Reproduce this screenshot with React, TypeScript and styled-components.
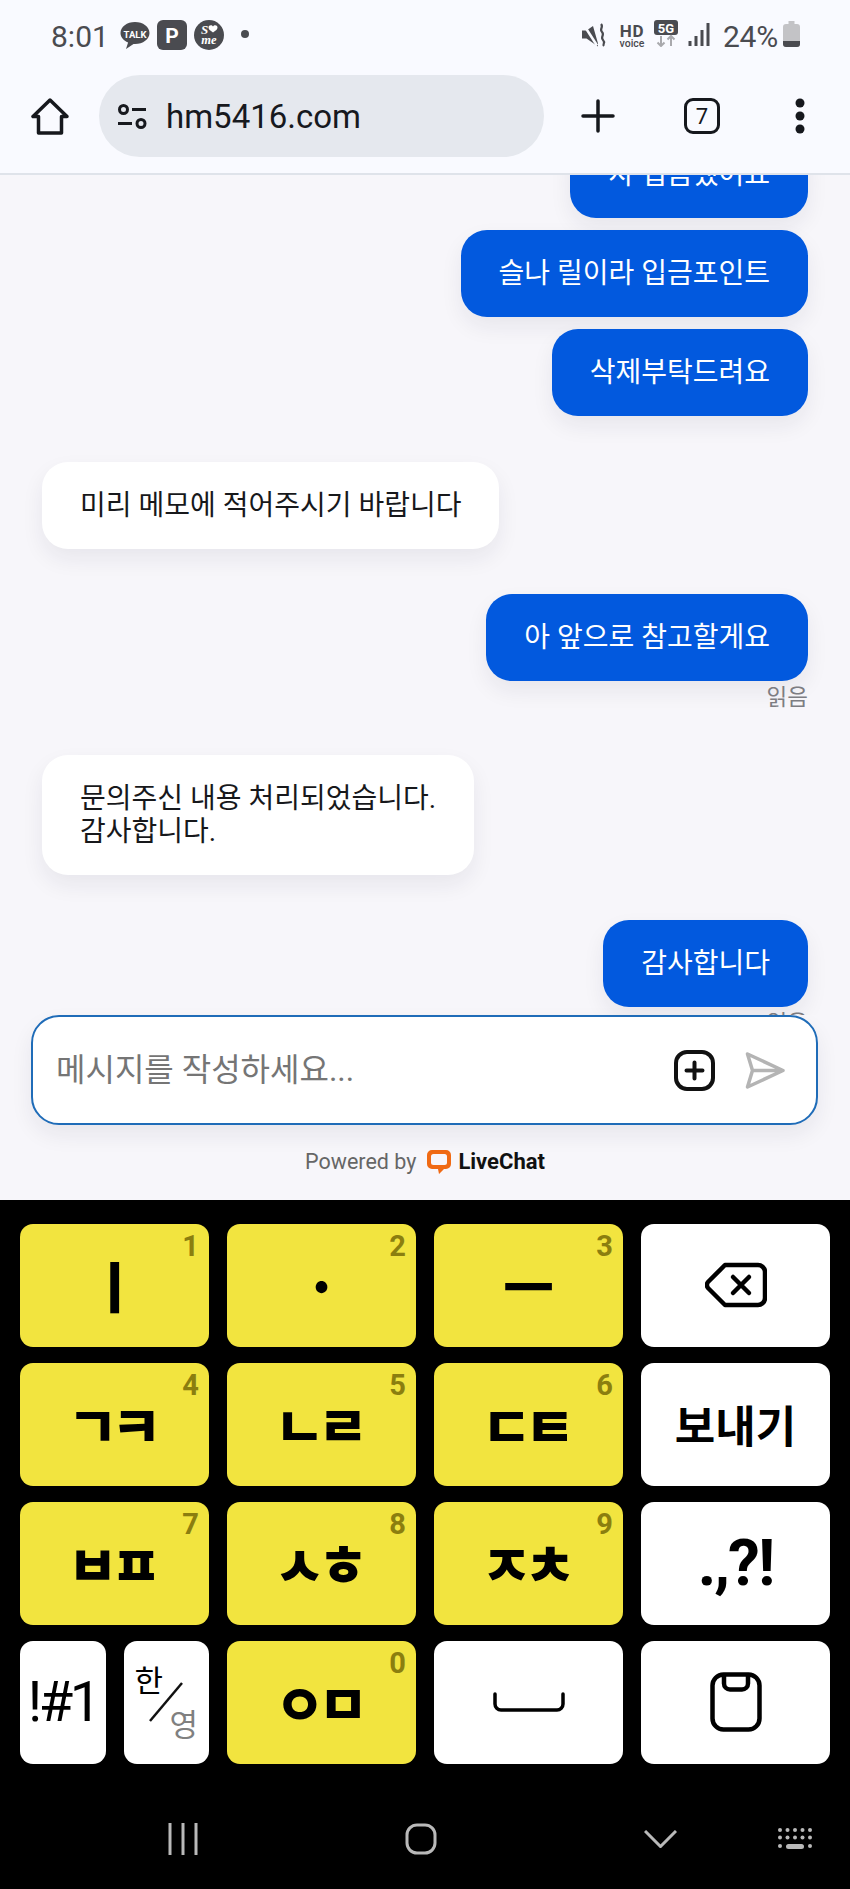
import styled, { createGlobalStyle } from "styled-components";

const GlobalStyle = createGlobalStyle`
    * {
        box-sizing: border-box;
    }
    html, body {
        margin: 0;
        padding: 0;
        background: #000;
    }
    body {
        font-family: Roboto, "Noto Sans CJK KR", sans-serif;
    }
`

const Page = styled.div`
    width: 850px;
    height: 1889px;
    display: flex;
    flex-direction: column;
    overflow: hidden;
`

const BrowserHeader = styled.header`
    height: 175px;
    flex: none;
    background: #f9faff;
    border-bottom: 2px solid #dfe3ea;
    position: relative;
    z-index: 2;
`

const StatusBar = styled.div`
    height: 75px;
    padding: 20px 50px 0 51px;
    display: flex;
    align-items: flex-start;
    color: #4a4b50;
`

const Clock = styled.span`
    font-size: 30px;
    line-height: 30px;
    margin: 2px 13px 0 0;
    width: 56px;
`

const NotifyIcons = styled.div`
    display: flex;
    align-items: flex-start;
    gap: 7px;
`

const NotifyDot = styled.span`
    width: 8px;
    height: 8px;
    margin: 10px 0 0 17px;
    border-radius: 50%;
    background: #4a4b50;
`

const SystemIcons = styled.div`
    margin-left: auto;
    display: flex;
    align-items: flex-start;
`

const Battery = styled.span`
    font-size: 30px;
    line-height: 30px;
    margin: 2px 5px 0 13px;
    letter-spacing: -0.2px;
`

const Toolbar = styled.div`
    height: 82px;
    padding-left: 31px;
    display: flex;
    align-items: center;
    color: #16181d;
`

const AddressPill = styled.div`
    width: 445px;
    height: 82px;
    margin: 0 37px 0 30px;
    padding-left: 18px;
    border-radius: 41px;
    background: #e5e8ee;
    display: flex;
    align-items: center;
    gap: 19px;
`

const AddressText = styled.span`
    font-size: 33px;
    color: #17191e;
`

const TabCount = styled.span`
    width: 36px;
    height: 36px;
    margin: 0 74px 0 69px;
    border: 3.5px solid #16181d;
    border-radius: 9px;
    font-size: 22px;
    display: flex;
    align-items: center;
    justify-content: center;
`

const ChatPanel = styled.main`
    height: 1025px;
    flex: none;
    background: #f7f6fa;
    display: flex;
    flex-direction: column;
`

const ThreadClip = styled.div`
    height: 840px;
    flex: none;
    overflow: hidden;
    display: flex;
    flex-direction: column;
    justify-content: flex-end;
`

const Thread = styled.div`
    padding: 0 42px;
    margin-bottom: -20px;
    display: flex;
    flex-direction: column;
    gap: 45.5px;
`

const Group = styled.div<{ $mine?: boolean }>`
    display: flex;
    flex-direction: column;
    gap: 12px;
    align-items: ${(p) => (p.$mine ? "flex-end" : "flex-start")};
`

const Bubble = styled.div<{ $mine?: boolean }>`
    padding: 27px 38px;
    border-radius: 26px;
    font-size: 28px;
    line-height: 33px;
    white-space: pre-line;
    color: ${(p) => (p.$mine ? "#fff" : "#17181b")};
    background: ${(p) => (p.$mine ? "#0259de" : "#fff")};
    box-shadow: 0 10px 22px rgba(30, 30, 60, 0.07);
`

const Receipt = styled.span`
    margin-top: -8px;
    height: 24px;
    font-size: 22.5px;
    line-height: 24px;
    color: #7d7d82;
`

const Composer = styled.div`
    width: 787px;
    height: 110px;
    flex: none;
    margin-left: 31px;
    padding: 0 31px 0 23px;
    border: 2px solid #1f6cb8;
    border-radius: 28px;
    background: #fff;
    box-shadow: 0 10px 22px rgba(30, 30, 60, 0.07);
    display: flex;
    align-items: center;
    position: relative;
`

const ComposerInput = styled.input`
    flex: 1;
    min-width: 0;
    height: 60px;
    border: 0;
    outline: 0;
    padding: 0;
    font: 32px Roboto, "Noto Sans CJK KR", sans-serif;
    background: transparent;

    ::placeholder {
        color: #7b7b7f;
        opacity: 1;
    }
`

const Credit = styled.div`
    margin-top: 24px;
    display: flex;
    align-items: center;
    justify-content: center;
    gap: 10px;
    font-size: 21.5px;
    color: #666;
`

const LiveChatMark = styled.span`
    display: flex;
    align-items: center;
    gap: 6px;
    color: #111;
    font-weight: 700;
    font-size: 22px;
`

const KeyboardArea = styled.section`
    flex: 1;
    background: #000;
    padding-top: 24px;
`

const KeyGrid = styled.div`
    padding: 0 20px;
    display: grid;
    grid-template-columns: repeat(4, 189px);
    grid-auto-rows: 122.5px;
    column-gap: 18px;
    row-gap: 16.5px;
`

const Key = styled.div<{ $yellow?: boolean }>`
    position: relative;
    border-radius: 13px;
    background: ${(p) => (p.$yellow ? "#f2e43f" : "#fff")};
    color: #000;
    display: flex;
    align-items: center;
    justify-content: center;
`

const SplitKeys = styled.div`
    display: grid;
    grid-template-columns: 1fr 1fr;
    gap: 18px;
`

const KeyDigit = styled.span`
    position: absolute;
    top: 5px;
    right: 10px;
    font-size: 29px;
    font-weight: 700;
    color: #8b7e0f;
`

const Jamo = styled.span`
    font-family: "Noto Sans CJK KR", sans-serif;
    font-weight: 900;
    font-size: 55px;
    letter-spacing: -7px;
    line-height: 1;
    margin: -2px 0 0 -7px;
`

const KeyLabel = styled.span<{ $size: number; $weight?: number; $tight?: number }>`
    font-family: Roboto, "Noto Sans CJK KR", sans-serif;
    font-size: ${(p) => p.$size}px;
    font-weight: ${(p) => p.$weight ?? 500};
    letter-spacing: ${(p) => p.$tight ?? 0}px;
`

const HanYeong = styled(Key)`
    font-family: "Noto Sans CJK KR", sans-serif;
    font-size: 31px;
    line-height: 1;
`

const HanLabel = styled.span`
    position: absolute;
    top: 22px;
    left: 11px;
`

const YeongLabel = styled.span`
    position: absolute;
    bottom: 26px;
    right: 11px;
    color: #808080;
`

const NavBar = styled.nav`
    height: 100px;
    margin-top: 25px;
    padding-left: 62px;
    display: grid;
    grid-template-columns: 242px 234px 244px 26px;
    justify-items: center;
    align-items: center;
    color: #b9b9b9;
`

const Talk = () => (
    <svg width="30" height="30" viewBox="0 0 30 30">
        <path d="M15 2C7 2 .5 6.900.5 13c0 4.200 3 7.600 7.600 9.500L6 29l7.500-5c.5 0 1 .1 1.500.1 8 0 14.500-5 14.500-11.100S23 2 15 2z" fill="#4a4b50" />
        <text x="15" y="17.500" fontSize="9.500" fontWeight="700" fill="#fff" textAnchor="middle" fontFamily="Roboto, sans-serif">TALK</text>
    </svg>
)

const ParkIcon = () => (
    <svg width="30" height="30" viewBox="0 0 30 30">
        <rect width="30" height="30" rx="6" fill="#4a4b50" />
        <text x="15" y="23" fontSize="21" fontWeight="700" fill="#fff" textAnchor="middle" fontFamily="Roboto, sans-serif">P</text>
    </svg>
)

const SomeIcon = () => (
    <svg width="30" height="30" viewBox="0 0 30 30">
        <circle cx="15" cy="15" r="15" fill="#4a4b50" />
        <text x="10.500" y="14" fontSize="13" fontStyle="italic" fontWeight="700" fill="#fff" textAnchor="middle" fontFamily="'Liberation Serif', serif">S</text>
        <path d="M19 12.500c-3-2-4.500-3.300-4.500-5 0-2.500 3.400-3 4.500-1 1.100-2 4.500-1.500 4.500 1 0 1.700-1.500 3-4.500 5z" fill="#fff" />
        <text x="15" y="24" fontSize="12.500" fontStyle="italic" fontWeight="700" fill="#fff" textAnchor="middle" fontFamily="'Liberation Serif', serif">me</text>
    </svg>
)

const MuteIcon = () => (
    <svg width="24" height="24" viewBox="0 0 24 24" style={{ marginTop: 3 }}>
        <path d="M0 7.500h4.500L11 3l5 17.500v3L4.500 15.500H0z" fill="#4a4b50" />
        <path d="M1.500 1.500l13.500 21" stroke="#f9faff" strokeWidth="2.500" />
        <path d="M19 1c3 3-2 5 1 8s-2 5 1 8-1 4 1 6" stroke="#4a4b50" strokeWidth="2.200" fill="none" />
    </svg>
)

const HdVoice = () => (
    <svg width="28" height="24" viewBox="0 0 28 24" overflow="visible" style={{ margin: "4px 0 0 12px" }}>
        <text x="14" y="13" fontSize="17" fontWeight="700" fill="#4a4b50" textAnchor="middle" letterSpacing="0.800" fontFamily="Roboto, sans-serif">HD</text>
        <text x="14" y="22.500" fontSize="10.500" fontWeight="500" fill="#4a4b50" textAnchor="middle" fontFamily="Roboto, sans-serif">voice</text>
    </svg>
)

const FiveG = () => (
    <svg width="24" height="27" viewBox="0 0 24 27" style={{ marginLeft: 8 }}>
        <rect width="24" height="15" rx="3" fill="#4a4b50" />
        <text x="12" y="12.500" fontSize="13" fontWeight="700" fill="#fff" textAnchor="middle" fontFamily="Roboto, sans-serif">5G</text>
        <path d="M7 16v10M3.500 22.500L7 26l3.500-3.500" stroke="#a9a9ad" strokeWidth="2" fill="none" />
        <path d="M17 26V16M13.500 19.500L17 16l3.500 3.500" stroke="#a9a9ad" strokeWidth="2" fill="none" />
    </svg>
)

const Signal = () => (
    <svg width="22" height="23" viewBox="0 0 22 23" style={{ margin: "3px 0 0 10px" }}>
        <path d="M2 18v5M8 13v10M14 7v16M20 0v23" stroke="#4a4b50" strokeWidth="3" />
    </svg>
)

const BatteryIcon = () => (
    <svg width="17" height="26" viewBox="0 0 17 26" style={{ marginTop: 1 }}>
        <path d="M5.500 0h6v3h2.500a3 3 0 0 1 3 3v17a3 3 0 0 1-3 3H3a3 3 0 0 1-3-3V6a3 3 0 0 1 3-3h2.500z" fill="#c3c3c6" />
        <path d="M0 20h17v3a3 3 0 0 1-3 3H3a3 3 0 0 1-3-3z" fill="#4a4b50" />
    </svg>
)

const HomeIcon = () => (
    <svg width="38" height="37" viewBox="0 0 38 37" fill="none" stroke="#16181d" strokeWidth="3.500" strokeLinejoin="round">
        <path d="M19 2L2 18.500h5.500V35h23V18.500H36z" />
    </svg>
)

const TuneIcon = () => (
    <svg width="30" height="25" viewBox="0 0 30 25" fill="none" stroke="#17191e" strokeWidth="3">
        <circle cx="6.500" cy="5.500" r="4" />
        <path d="M15 5.500h14M1 19.500h14" />
        <circle cx="24" cy="19.500" r="4" />
    </svg>
)

const PlusIcon = () => (
    <svg width="34" height="34" viewBox="0 0 34 34" stroke="#16181d" strokeWidth="3.500" strokeLinecap="round">
        <path d="M17 2v30M2 17h30" />
    </svg>
)

const DotsIcon = () => (
    <svg width="12" height="38" viewBox="0 0 12 38" fill="#16181d">
        <circle cx="6" cy="6" r="4.500" />
        <circle cx="6" cy="19" r="4.500" />
        <circle cx="6" cy="32" r="4.500" />
    </svg>
)

const AttachIcon = () => (
    <svg width="41" height="41" viewBox="0 0 41 41" fill="none" stroke="#111" style={{ marginRight: 30 }}>
        <rect x="2" y="2" width="37" height="37" rx="11" strokeWidth="4" />
        <path d="M20.500 12.500v16M12.500 20.500h16" strokeWidth="4" strokeLinecap="round" />
    </svg>
)

const SendIcon = () => (
    <svg width="40" height="37" viewBox="0 0 40 37" fill="none" stroke="#b4b4b4" strokeWidth="3.500" strokeLinejoin="round">
        <path d="M2.500 2L38 18.500 2.500 35l5-16.500zM7.500 18.500H38" />
    </svg>
)

const LiveChatLogo = () => (
    <svg width="26" height="25" viewBox="0 0 26 25">
        <path d="M6 1h14a5 5 0 0 1 5 5v9a5 5 0 0 1-5 5h-2l-5 5-1-5H6a5 5 0 0 1-5-5V6a5 5 0 0 1 5-5z" fill="#f06a14" />
        <path d="M7.500 5h11a2.500 2.500 0 0 1 2.500 2.500v6a2.500 2.500 0 0 1-2.500 2.500h-11A2.500 2.500 0 0 1 5 13.500v-6A2.500 2.500 0 0 1 7.500 5z" fill="#f7f6fa" />
    </svg>
)

const BackspaceIcon = () => (
    <svg width="62" height="46" viewBox="0 0 62 46" fill="none" stroke="#000" strokeWidth="4.500" strokeLinejoin="round">
        <path d="M20 3h33a7 7 0 0 1 7 7v26a7 7 0 0 1-7 7H20L3 26a5 5 0 0 1 0-6z" />
        <path d="M28 15l16 16M44 15L28 31" strokeLinecap="round" strokeWidth="4.500" />
    </svg>
)

const SpaceIcon = () => (
    <svg width="72" height="20" viewBox="0 0 72 20" fill="none" stroke="#000" strokeWidth="3.500" strokeLinecap="round">
        <path d="M2 2v10a6 6 0 0 0 6 6h56a6 6 0 0 0 6-6V2" />
    </svg>
)

const ClipboardIcon = () => (
    <svg width="52" height="60" viewBox="0 0 52 60" fill="none" stroke="#000" strokeWidth="4.500">
        <rect x="2.500" y="2.500" width="47" height="55" rx="11" />
        <path d="M14 2.500v9a6 6 0 0 0 6 6h12a6 6 0 0 0 6-6v-9" />
    </svg>
)

const SlashIcon = () => (
    <svg width="36" height="40" viewBox="0 0 36 40" stroke="#111" strokeWidth="2.500">
        <path d="M34 1L2 39" />
    </svg>
)

const RecentsIcon = () => (
    <svg width="30" height="32" viewBox="0 0 30 32" stroke="#b9b9b9" strokeWidth="3">
        <path d="M2 0v32M15 0v32M28 0v32" />
    </svg>
)

const NavHomeIcon = () => (
    <svg width="32" height="32" viewBox="0 0 32 32" fill="none" stroke="#b9b9b9" strokeWidth="3">
        <rect x="2" y="2" width="28" height="28" rx="10" />
    </svg>
)

const ChevronIcon = () => (
    <svg width="33" height="18" viewBox="0 0 33 18" fill="none" stroke="#b9b9b9" strokeWidth="3">
        <path d="M1 1l15.500 15.500L32 1" />
    </svg>
)

const KeyboardIcon = () => (
    <svg width="38" height="22" viewBox="0 0 38 22" fill="#b9b9b9">
        {[0, 7.5].map((y) =>
            [2, 9.500, 17, 24.500, 32].map((x) => <rect key={`${x}-${y}`} x={x} y={y} width="4" height="4" rx="2" />)
        )}
        <rect x="2" y="16" width="4" height="4" rx="2" />
        <rect x="10" y="16" width="18" height="5" rx="2.500" />
        <rect x="32" y="16" width="4" height="4" rx="2" />
    </svg>
)

const JamoKey = ({ jamo, digit }: { jamo: string; digit: string }) => (
    <Key $yellow>
        <KeyDigit>{digit}</KeyDigit>
        <Jamo>{jamo}</Jamo>
    </Key>
)

export default function App() {
    return (
        <Page>
            <GlobalStyle />
            <BrowserHeader>
                <StatusBar>
                    <Clock>8:01</Clock>
                    <NotifyIcons>
                        <Talk />
                        <ParkIcon />
                        <SomeIcon />
                    </NotifyIcons>
                    <NotifyDot />
                    <SystemIcons>
                        <MuteIcon />
                        <HdVoice />
                        <FiveG />
                        <Signal />
                        <Battery>24%</Battery>
                        <BatteryIcon />
                    </SystemIcons>
                </StatusBar>
                <Toolbar>
                    <HomeIcon />
                    <AddressPill>
                        <TuneIcon />
                        <AddressText>hm5416.com</AddressText>
                    </AddressPill>
                    <PlusIcon />
                    <TabCount>7</TabCount>
                    <DotsIcon />
                </Toolbar>
            </BrowserHeader>

            <ChatPanel>
                <ThreadClip>
                    <Thread>
                        <Group $mine>
                            <Bubble $mine>사 입금했어요</Bubble>
                            <Bubble $mine>슬나 릴이라 입금포인트</Bubble>
                            <Bubble $mine>삭제부탁드려요</Bubble>
                        </Group>
                        <Group>
                            <Bubble>미리 메모에 적어주시기 바랍니다</Bubble>
                        </Group>
                        <Group $mine>
                            <Bubble $mine>아 앞으로 참고할게요</Bubble>
                            <Receipt>읽음</Receipt>
                        </Group>
                        <Group>
                            <Bubble>{"문의주신 내용 처리되었습니다.\n감사합니다."}</Bubble>
                        </Group>
                        <Group $mine>
                            <Bubble $mine>감사합니다</Bubble>
                            <Receipt>읽음</Receipt>
                        </Group>
                    </Thread>
                </ThreadClip>
                <Composer>
                    <ComposerInput placeholder="메시지를 작성하세요..." readOnly />
                    <AttachIcon />
                    <SendIcon />
                </Composer>
                <Credit>
                    Powered by
                    <LiveChatMark>
                        <LiveChatLogo />
                        LiveChat
                    </LiveChatMark>
                </Credit>
            </ChatPanel>

            <KeyboardArea>
                <KeyGrid>
                    <JamoKey jamo="ㅣ" digit="1" />
                    <JamoKey jamo="·" digit="2" />
                    <JamoKey jamo="ㅡ" digit="3" />
                    <Key><BackspaceIcon /></Key>
                    <JamoKey jamo="ㄱㅋ" digit="4" />
                    <JamoKey jamo="ㄴㄹ" digit="5" />
                    <JamoKey jamo="ㄷㅌ" digit="6" />
                    <Key><KeyLabel $size={44} $weight={700}>보내기</KeyLabel></Key>
                    <JamoKey jamo="ㅂㅍ" digit="7" />
                    <JamoKey jamo="ㅅㅎ" digit="8" />
                    <JamoKey jamo="ㅈㅊ" digit="9" />
                    <Key><KeyLabel $size={64} $weight={700} $tight={-2}>.,?!</KeyLabel></Key>
                    <SplitKeys>
                        <Key><KeyLabel $size={56} $weight={400} $tight={-3.5}>!#1</KeyLabel></Key>
                        <HanYeong>
                            <HanLabel>한</HanLabel>
                            <SlashIcon />
                            <YeongLabel>영</YeongLabel>
                        </HanYeong>
                    </SplitKeys>
                    <JamoKey jamo="ㅇㅁ" digit="0" />
                    <Key><SpaceIcon /></Key>
                    <Key><ClipboardIcon /></Key>
                </KeyGrid>
                <NavBar>
                    <RecentsIcon />
                    <NavHomeIcon />
                    <ChevronIcon />
                    <KeyboardIcon />
                </NavBar>
            </KeyboardArea>
        </Page>
    )
}
